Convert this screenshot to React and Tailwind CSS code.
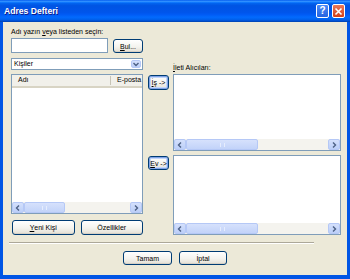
import React from "react";

function Btn({ children, className = "", focus = false }) {
  return (
    <button
      type="button"
      className={`flex items-center justify-center rounded-[3px] border border-[#003C74] bg-[linear-gradient(#FFFFFF,#F4F3EE_55%,#E3DFD4)] text-[7px] leading-none text-black ${
        focus
          ? "shadow-[inset_0_0_0_1px_#7FA2E6,inset_0_0_0_2px_#C2D6FA]"
          : "shadow-[inset_0_-1px_0_#D6D0C5]"
      } ${className}`}
    >
      {children}
    </button>
  );
}

function Chevron({ dir }) {
  const d =
    dir === "left"
      ? "M5 1.5 L2.5 4 L5 6.5"
      : dir === "right"
      ? "M3 1.5 L5.5 4 L3 6.5"
      : "M1.5 3 L4 5.5 L6.5 3";
  return (
    <svg width="8" height="8" viewBox="0 0 8 8">
      <path d={d} fill="none" stroke="#4D6185" strokeWidth="1.4" />
    </svg>
  );
}

function ArrowBox({ dir }) {
  return (
    <div className="flex w-[12px] items-center justify-center rounded-[2px] border border-[#B5C8F6] bg-[linear-gradient(#D4E0FC,#BCCFF8)]">
      <Chevron dir={dir} />
    </div>
  );
}

function HScroll({ thumb }) {
  return (
    <div className="flex h-[11px] bg-[#F4F3EE]">
      <ArrowBox dir="left" />
      <div className={`flex items-center justify-center rounded-[2px] border border-[#B5C8F6] bg-[linear-gradient(#D6E1FC,#C2D3F9)] ${thumb}`}>
        <div className="h-[4px] w-[5px] border-x border-[#E6EDFD]" />
      </div>
      <div className="flex-1" />
      <ArrowBox dir="right" />
    </div>
  );
}

export default function App() {
  return (
    <div className="flex h-[279px] w-[350px] flex-col bg-[#0055E5] font-['Liberation_Sans',Arial,sans-serif] text-black">
      {/* Title bar */}
      <div className="flex h-[22px] items-center bg-[linear-gradient(#0058EE_0%,#3593FF_6%,#127DFF_10%,#0262EE_16%,#0054E3_26%,#0055EB_56%,#005BF5_66%,#026AFE_78%,#0062EF_88%,#0052D6_94%,#0040AB_100%)] pl-[4px] pr-[5px]">
        <span className="flex-1 text-[8.6px] font-bold text-white [text-shadow:1px_1px_0_#0F1A8A]">
          Adres Defteri
        </span>
        <div className="flex gap-[3px]">
          <div className="flex h-[14px] w-[13px] items-center justify-center rounded-[2px] border border-white bg-[linear-gradient(#4A8BF8,#2563E0)] text-[10px] font-bold leading-none text-white">
            ?
          </div>
          <div className="flex h-[14px] w-[13px] items-center justify-center rounded-[2px] border border-white bg-[linear-gradient(#E9795A,#D2401A)]">
            <svg width="9" height="9" viewBox="0 0 9 9">
              <path d="M1.5 1.5 L7.5 7.5 M7.5 1.5 L1.5 7.5" stroke="white" strokeWidth="1.6" />
            </svg>
          </div>
        </div>
      </div>

      {/* Body */}
      <div className="mx-[3px] mb-[4px] flex flex-1 flex-col bg-[#ECE9D8] pl-[8px] pr-[6px] pt-[5px] text-[7px]">
        <div className="flex">
          {/* Left column */}
          <div className="flex w-[132px] flex-col">
            <div className="h-[9px] leading-[9px]">
              Adı yazın <span className="underline">v</span>eya listeden seçin:
            </div>
            <div className="mt-[2px] flex items-start gap-[5px]">
              <div className="h-[15px] w-[97px] border border-[#7F9DB9] bg-white" />
              <Btn className="mt-px h-[14px] w-[30px]">
                <span className="underline">B</span>ul...
              </Btn>
            </div>
            <div className="mt-[5px] flex h-[12px] items-stretch border border-[#7F9DB9] bg-white">
              <div className="flex flex-1 items-center pl-[2px]">Kişiler</div>
              <div className="m-px flex w-[10px] items-center justify-center rounded-[2px] border border-[#B5C8F6] bg-[linear-gradient(#D4E0FC,#BCCFF8)]">
                <Chevron dir="down" />
              </div>
            </div>
            <div className="mt-[4px] flex h-[140px] flex-col border border-[#7F9DB9] bg-white">
              <div className="flex h-[13px] items-center overflow-hidden border-b-2 border-[#D8D4C4] bg-[#F1F0EA]">
                <div className="w-[98px] shrink-0 pl-[6px]">Adı</div>
                <div className="h-[9px] w-px shrink-0 bg-[#C7C4B6]" />
                <div className="shrink-0 pl-[6px]">E-posta</div>
              </div>
              <div className="flex-1" />
              <HScroll thumb="w-[41px]" />
            </div>
            <div className="ml-px mt-[6px] flex gap-[6px]">
              <Btn className="h-[15px] w-[63px]">
                <span className="underline">Y</span>eni Kişi
              </Btn>
              <Btn className="h-[15px] w-[63px]">Özellikler</Btn>
            </div>
          </div>

          {/* Middle column */}
          <div className="ml-[5px] flex w-[21px] flex-col">
            <Btn focus className="mt-[48px] h-[15px] w-[21px]">
              <span className="underline">İ</span>ş -&gt;
            </Btn>
            <Btn focus className="mt-[66px] h-[14px] w-[21px]">
              <span className="underline">E</span>v -&gt;
            </Btn>
          </div>

          {/* Right column */}
          <div className="ml-[4px] flex flex-1 flex-col">
            <div className="mt-[36px] h-[9px] leading-[9px]">
              <span className="underline">İ</span>leti Alıcıları:
            </div>
            <div className="mt-[2px] flex h-[77px] flex-col border border-[#7F9DB9] bg-white">
              <div className="flex-1" />
              <HScroll thumb="w-[72px]" />
            </div>
            <div className="mt-[4px] flex h-[80px] flex-col border border-[#7F9DB9] bg-white">
              <div className="flex-1" />
              <HScroll thumb="w-[72px]" />
            </div>
          </div>
        </div>

        <div className="-ml-[2px] mt-[7px] w-[305px] border-t border-b border-t-[#ACA899] border-b-white" />

        <div className="mt-[7px] flex justify-center gap-[7px] pr-[2px]">
          <Btn className="h-[14px] w-[49px]">Tamam</Btn>
          <Btn className="h-[14px] w-[48px]">İptal</Btn>
        </div>
      </div>
    </div>
  );
}
